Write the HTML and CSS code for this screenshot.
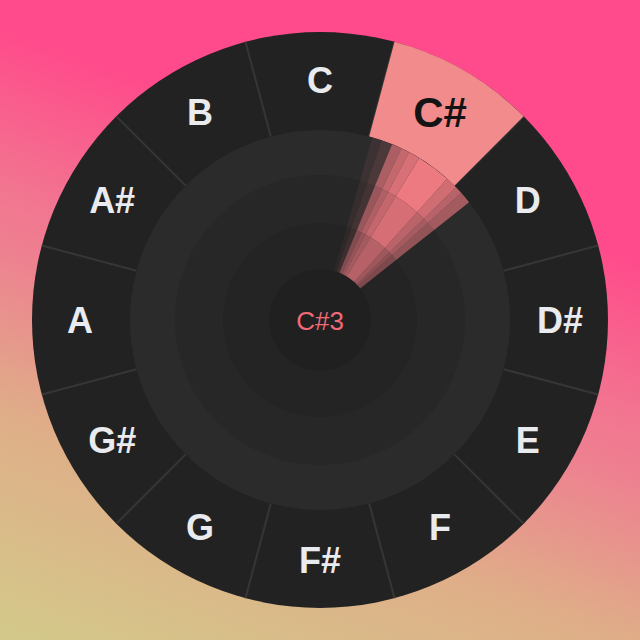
FILE: index.html
```html
<!DOCTYPE html>
<html lang="en">
<head>
    <meta charset="UTF-8">
    <meta name="viewport" content="width=device-width, initial-scale=1.0">
    <title>Tuner</title>
    <link rel="stylesheet" href="styles.css">
</head>
<body>
    <div class="tuner">
        <svg id="wheel" class="wheel" viewBox="0 0 576 576" width="576" height="576">
            <circle cx="288" cy="288" r="288" class="ring-bg"></circle>
            <g id="separators"></g>
            <path id="activeSlice" class="slice-active"></path>
            <circle cx="288" cy="288" r="190" class="disc disc-1"></circle>
            <circle cx="288" cy="288" r="145" class="disc disc-2"></circle>
            <circle cx="288" cy="288" r="97" class="disc disc-3"></circle>
            <g id="history"></g>
            <circle cx="288" cy="288" r="51" class="disc disc-4"></circle>
            <g id="labels"></g>
            <text x="288" y="289" class="current">C#3</text>
        </svg>
    </div>

    <script>
        const NS = 'http://www.w3.org/2000/svg';
        const notes = ['C', 'C#', 'D', 'D#', 'E', 'F', 'F#', 'G', 'G#', 'A', 'A#', 'B'];
        const active = 1;
        const cx = 288, cy = 288;

        function pt(r, deg) {
            const a = deg * Math.PI / 180;
            return [cx + r * Math.sin(a), cy - r * Math.cos(a)];
        }

        function sector(r1, r2, a1, a2) {
            const large = (a2 - a1) > 180 ? 1 : 0;
            const [x1, y1] = pt(r2, a1);
            const [x2, y2] = pt(r2, a2);
            const [x3, y3] = pt(r1, a2);
            const [x4, y4] = pt(r1, a1);
            return `M${x1} ${y1} A${r2} ${r2} 0 ${large} 1 ${x2} ${y2} L${x3} ${y3} A${r1} ${r1} 0 ${large} 0 ${x4} ${y4} Z`;
        }

        // separators between notes
        const sepGroup = document.getElementById('separators');
        for (let i = 0; i < 12; i++) {
            const a = 15 + i * 30;
            const [x1, y1] = pt(190, a);
            const [x2, y2] = pt(288, a);
            const line = document.createElementNS(NS, 'line');
            line.setAttribute('x1', x1);
            line.setAttribute('y1', y1);
            line.setAttribute('x2', x2);
            line.setAttribute('y2', y2);
            line.setAttribute('class', 'separator');
            sepGroup.appendChild(line);
        }

        document.getElementById('activeSlice')
            .setAttribute('d', sector(190, 288, active * 30 - 15, active * 30 + 15));

        // pitch history fan: [start, end, strength]
        const bands = [
            [16, 19, 0.09], [19, 22.3, 0.16], [22.3, 25.4, 0.64], [25.4, 28, 0.76],
            [28, 31.5, 0.86], [31.5, 42, 0.97], [42, 45.7, 0.82], [45.7, 48, 0.7], [48, 51.7, 0.6]
        ];
        const rings = [[145, 190, 1], [97, 145, 0.88], [51, 97, 0.72]];
        const history = document.getElementById('history');
        rings.forEach(([r1, r2, k]) => {
            bands.forEach(([a1, a2, s]) => {
                const p = document.createElementNS(NS, 'path');
                p.setAttribute('d', sector(r1, r2, a1, a2));
                p.setAttribute('class', 'history-band');
                p.setAttribute('fill-opacity', (s * k).toFixed(2));
                history.appendChild(p);
            });
        });

        // note labels
        const labels = document.getElementById('labels');
        notes.forEach((n, i) => {
            const [x, y] = pt(240, i * 30);
            const t = document.createElementNS(NS, 'text');
            t.setAttribute('x', x);
            t.setAttribute('y', y);
            t.setAttribute('class', i === active ? 'note note-active' : 'note');
            t.textContent = n;
            labels.appendChild(t);
        });
    </script>
</body>
</html>
```
FILE: styles.css
```css
html, body {
    margin: 0;
    padding: 0;
}

body {
    min-height: 100vh;
    display: flex;
    align-items: center;
    justify-content: center;
    background: linear-gradient(200deg, #ff4a8b 0%, #ff4b8b 30%, #f27590 48%, #ee8090 55%, #dfae88 74%, #d3c98a 100%);
    font-family: "Liberation Sans", Arial, sans-serif;
}

.tuner {
    width: 576px;
    height: 576px;
}

.wheel {
    display: block;
}

.ring-bg {
    fill: #222222;
}

.separator {
    stroke: #363636;
    stroke-width: 2;
}

.slice-active {
    fill: #f28b8b;
}

.disc-1 {
    fill: #2b2b2b;
}

.disc-2 {
    fill: #272727;
}

.disc-3 {
    fill: #242424;
}

.disc-4 {
    fill: #202020;
}

.history-band {
    fill: #f47c84;
}

.note {
    fill: #e9ebef;
    font-size: 36px;
    font-weight: bold;
    text-anchor: middle;
    dominant-baseline: central;
}

.note-active {
    fill: #141414;
    font-size: 42px;
}

.current {
    fill: #f06a78;
    font-size: 26px;
    text-anchor: middle;
    dominant-baseline: central;
}
```
